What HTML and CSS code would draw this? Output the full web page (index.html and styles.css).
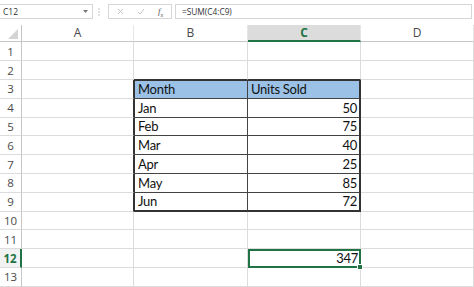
FILE: index.html
```html
<!DOCTYPE html>
<html lang="en">
<head>
    <meta charset="UTF-8">
    <meta name="viewport" content="width=device-width, initial-scale=1.0">
    <title>Units Sold</title>
    <link rel="stylesheet" href="styles.css">
</head>
<body>
    <div class="formula-bar">
        <div class="name-box">
            <span>C12</span>
            <svg class="caret" width="5" height="3" viewBox="0 0 5 3"><path d="M0 0h5L2.5 3z"/></svg>
        </div>
        <svg class="grip" width="2" height="8" viewBox="0 0 2 8">
            <circle cx="1" cy="1" r="0.7"/><circle cx="1" cy="4" r="0.7"/><circle cx="1" cy="7" r="0.7"/>
        </svg>
        <div class="fx-box">
            <svg width="7" height="7" viewBox="0 0 7 7"><path d="M1 1l5 5M6 1L1 6"/></svg>
            <svg width="8" height="7" viewBox="0 0 8 7"><path d="M1 4l2 2 4-5"/></svg>
            <span class="fx">f<sub>x</sub></span>
        </div>
        <div class="formula">=SUM(C4:C9)</div>
    </div>

    <div class="sheet">
        <div class="corner"><svg width="10" height="10" viewBox="0 0 10 10"><path d="M10 0v10H0z"/></svg></div>
        <div class="ch">A</div><div class="ch">B</div><div class="ch active">C</div><div class="ch">D</div>

        <div class="rh">1</div><div></div><div></div><div></div><div></div>
        <div class="rh">2</div><div></div><div class="above"></div><div class="above"></div><div></div>
        <div class="rh">3</div><div class="edge"></div><div class="t t-l t-top hdr">Month</div><div class="t t-r t-top hdr">Units Sold</div><div></div>
        <div class="rh">4</div><div class="edge"></div><div class="t t-l">Jan</div><div class="t t-r num">50</div><div></div>
        <div class="rh">5</div><div class="edge"></div><div class="t t-l">Feb</div><div class="t t-r num">75</div><div></div>
        <div class="rh">6</div><div class="edge"></div><div class="t t-l">Mar</div><div class="t t-r num">40</div><div></div>
        <div class="rh">7</div><div class="edge"></div><div class="t t-l">Apr</div><div class="t t-r num">25</div><div></div>
        <div class="rh">8</div><div class="edge"></div><div class="t t-l">May</div><div class="t t-r num">85</div><div></div>
        <div class="rh">9</div><div class="edge"></div><div class="t t-l t-bot">Jun</div><div class="t t-r t-bot num">72</div><div></div>
        <div class="rh">10</div><div></div><div></div><div></div><div></div>
        <div class="rh">11</div><div></div><div></div><div></div><div></div>
        <div class="rh active">12</div><div></div><div></div><div class="sel num">347</div><div></div>
        <div class="rh">13</div><div></div><div></div><div></div><div></div>
    </div>
</body>
</html>
```

FILE: styles.css
```css
body {
    margin: 0;
    background: #ffffff;
    font-family: 'Open Sans', sans-serif;
    color: #222;
}

/* formula bar */
.formula-bar {
    display: flex;
    align-items: flex-start;
    height: 25.4px;
    box-sizing: border-box;
    padding: 4px 2px 0 0;
}
.name-box {
    display: flex;
    align-items: center;
    justify-content: space-between;
    box-sizing: border-box;
    width: 93px;
    height: 15px;
    padding: 0 4px 0 3px;
    border: 1px solid #d6d6d6;
    border-left: none;
    font-size: 8.5px;
    color: #333;
}
.caret { fill: #777; }
.grip {
    margin: 4px 0 0 5px;
    fill: #b0b0b0;
}
.fx-box {
    display: flex;
    align-items: center;
    gap: 13px;
    box-sizing: border-box;
    width: 64px;
    height: 15px;
    margin-left: 8px;
    padding-left: 8px;
    border: 1px solid #d6d6d6;
}
.fx-box svg path {
    fill: none;
    stroke: #c4c4c4;
    stroke-width: 1;
}
.fx {
    font-family: 'Liberation Serif', serif;
    font-style: italic;
    font-size: 9px;
    color: #555;
}
.fx sub { font-size: 6px; }
.formula {
    flex: 1;
    box-sizing: border-box;
    height: 15px;
    margin-left: 3px;
    padding-left: 6px;
    border: 1px solid #d6d6d6;
    font-size: 8.3px;
    line-height: 13px;
    color: #333;
}

/* grid */
.sheet {
    display: grid;
    grid-template-columns: 22px 112px 114px 113px 113px;
    grid-template-rows: 17px repeat(13, 18.8px);
    font-family: Lato, sans-serif;
    font-size: 13px;
    letter-spacing: -0.25px;
    color: #111;
}
.sheet > div {
    display: flex;
    align-items: flex-end;
    box-sizing: border-box;
    min-width: 0;
    padding: 0 3px 1px;
    border-right: 1px solid #dcdcdc;
    border-bottom: 1px solid #dcdcdc;
    line-height: 15px;
    white-space: nowrap;
}
.sheet .corner {
    justify-content: flex-end;
    padding: 0 3px 2px 0;
    border-color: #c6c6c6;
}
.corner svg { fill: #d4d4d4; }
.sheet .ch {
    justify-content: center;
    align-items: center;
    font-family: 'Open Sans', sans-serif;
    font-size: 12px;
    letter-spacing: 0;
    color: #4a4a4a;
    border-right-color: #e6e6e6;
    border-bottom-color: #c6c6c6;
}
.sheet .ch.active {
    background: #dcdcdc;
    border-bottom: 2px solid #217346;
    color: #217346;
    font-weight: 700;
}
.sheet .rh {
    justify-content: center;
    align-items: center;
    padding: 0;
    font-family: 'Open Sans', sans-serif;
    font-size: 11.5px;
    letter-spacing: 0;
    color: #4a4a4a;
    border-right-color: #c6c6c6;
}
.sheet .rh.active {
    background: #f2f2f2;
    border-right: 2px solid #217346;
    color: #217346;
    font-weight: 700;
}

/* data range B3:C9 */
.sheet .edge { border-right-color: #333; }
.sheet .above { border-bottom-color: #333; }
.sheet .t {
    border-right-color: #444;
    border-bottom-color: #444;
}
.sheet .t-l { border-left: 1px solid #333; }
.sheet .t-r { border-right: 2px solid #333; }
.sheet .t-top { border-top: 1px solid #333; }
.sheet .t-bot { border-bottom: 2px solid #333; }
.sheet .hdr { background: #9bc2e6; }
.sheet .num {
    justify-content: flex-end;
    padding-right: 2px;
}

/* selected cell */
.sheet .sel {
    position: relative;
    outline: 2px solid #217346;
    outline-offset: -2px;
}
.sel::after {
    content: '';
    position: absolute;
    right: -3px;
    bottom: -3px;
    width: 4px;
    height: 4px;
    background: #217346;
    border: 1px solid #fff;
}
```
